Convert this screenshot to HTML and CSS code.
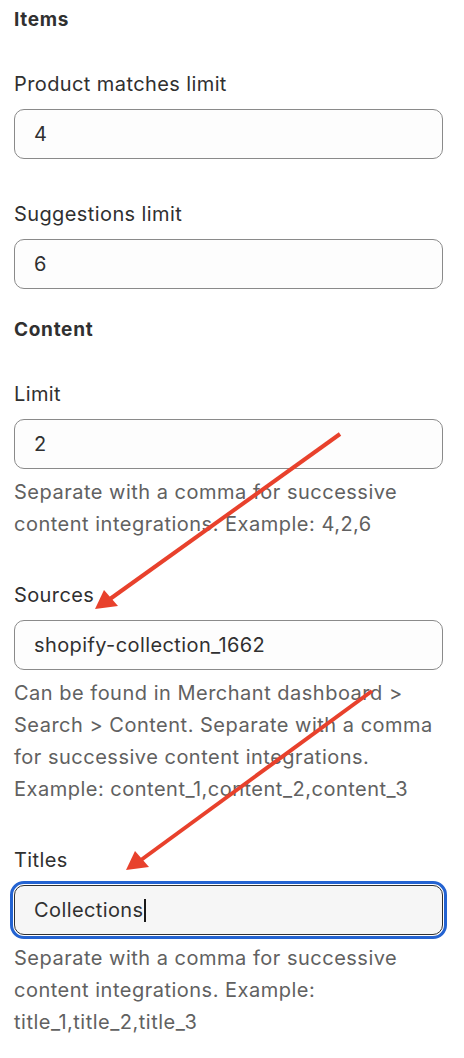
FILE: index.html
```html
<!DOCTYPE html>
<html lang="en">
<head>
<meta charset="utf-8">
<title>Settings</title>
<link rel="stylesheet" href="styles.css">
</head>
<body>
<main class="page">
  <h2 class="heading heading-first">Items</h2>
  <div class="field field-first">
    <label class="label">Product matches limit</label>
    <div class="input">4</div>
  </div>
  <div class="field">
    <label class="label">Suggestions limit</label>
    <div class="input">6</div>
  </div>
  <h2 class="heading heading-content">Content</h2>
  <div class="field field-first">
    <label class="label">Limit</label>
    <div class="input">2</div>
    <p class="help">Separate with a comma for successive content integrations. Example: 4,2,6</p>
  </div>
  <div class="field">
    <label class="label">Sources</label>
    <div class="input">shopify-collection_1662</div>
    <p class="help">Can be found in Merchant dashboard &gt; Search &gt; Content. Separate with a comma for successive content integrations. Example: content_1,content_2,content_3</p>
  </div>
  <div class="field">
    <label class="label">Titles</label>
    <div class="input input-focused">Collections<span class="caret"></span></div>
    <p class="help">Separate with a comma for successive content integrations. Example: title_1,title_2,title_3</p>
  </div>
</main>
<svg class="annotations" width="464" height="1058" viewBox="0 0 464 1058" aria-hidden="true">
  <g stroke="#e8412c" stroke-width="4" stroke-linecap="butt" fill="#e8412c">
    <line x1="340" y1="434" x2="110" y2="599"/>
    <polygon stroke="none" points="95,609 104,590 118,606"/>
    <line x1="372" y1="691" x2="141" y2="860"/>
    <polygon stroke="none" points="126,870 135,851 149,867"/>
  </g>
</svg>
</body>
</html>
```

FILE: styles.css
```css
html, body {
  margin: 0;
  padding: 0;
  background: #ffffff;
}

body {
  font-family: Inter, "Noto Sans", "Liberation Sans", sans-serif;
  color: #303030;
  position: relative;
  width: 464px;
  min-height: 1058px;
}

.page {
  padding: 6px 21px 0 14px;
}

.heading {
  margin: 0;
  font-size: 19px;
  font-weight: 650;
  letter-spacing: 0.7px;
  line-height: 28px;
  color: #303030;
}

.heading-content {
  margin-top: 27px;
}

.field {
  margin-top: 41px;
}

.field-first {
  margin-top: 36px;
}

.label {
  display: block;
  font-size: 20px;
  letter-spacing: 0.4px;
  line-height: 28px;
  margin-bottom: 11px;
  color: #303030;
}

.input {
  box-sizing: border-box;
  height: 50px;
  border: 1px solid #8a8a8a;
  border-radius: 10px;
  background: #fdfdfd;
  padding: 0 19px;
  display: flex;
  align-items: center;
  font-size: 20px;
  letter-spacing: 0.4px;
  color: #303030;
}

.input-focused {
  border-color: #303030;
  background: #f6f6f6;
  outline: 3px solid #2463d1;
  outline-offset: 1px;
}

.caret {
  display: inline-block;
  width: 2px;
  height: 23px;
  background: #1a1a1a;
  margin-left: 0;
}

.help {
  margin: 7px 0 0;
  font-size: 20px;
  letter-spacing: 0.5px;
  line-height: 32px;
  color: #616161;
}

.annotations {
  position: absolute;
  left: 0;
  top: 0;
  pointer-events: none;
}
```
